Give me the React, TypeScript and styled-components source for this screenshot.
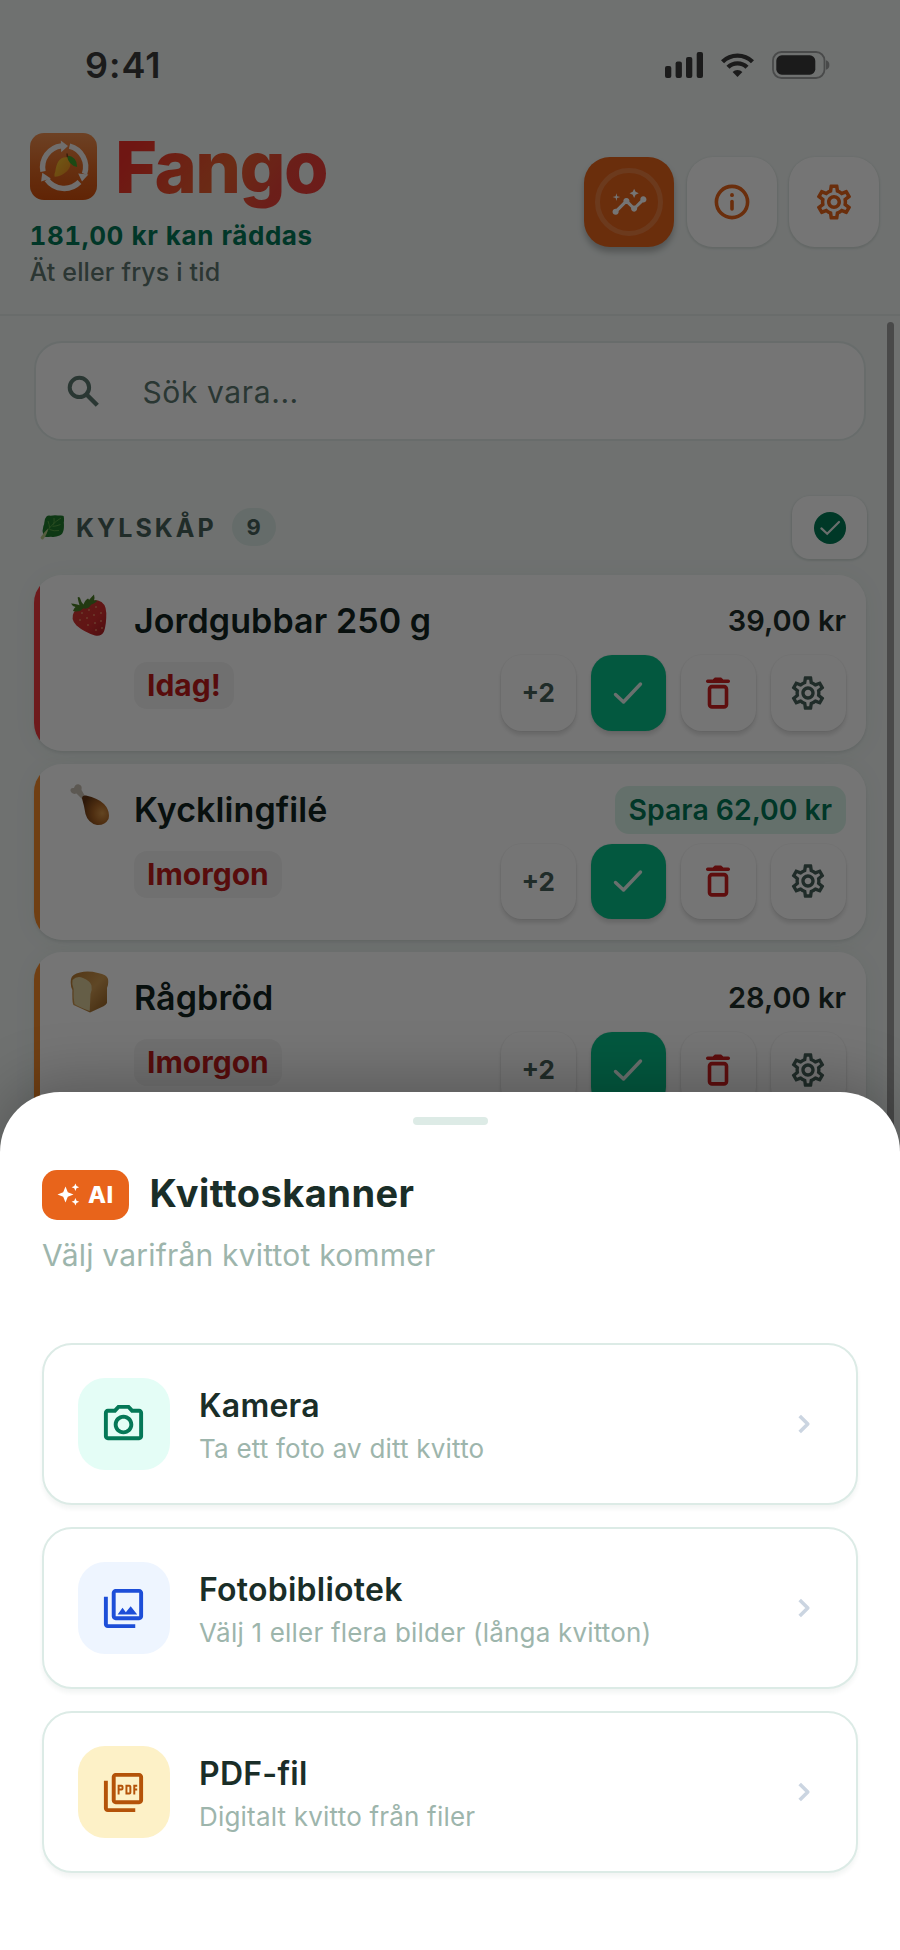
import React from "react";
import styled, { createGlobalStyle } from "styled-components";
import {
  MdInsights,
  MdOutlinePhotoCamera,
  MdOutlinePhotoLibrary,
  MdOutlinePictureAsPdf,
  MdOutlineSettings,
} from "react-icons/md";

const GlobalStyle = createGlobalStyle`
  * { box-sizing: border-box; }
  body { margin: 0; background: #fff; font-family: Inter, "Liberation Sans", sans-serif; }
  svg { display: block; flex: none; }
  button { font: inherit; border: 0; padding: 0; background: none; }
  h1, h2, h3, p { margin: 0; }
`;

const Screen = styled.div`
  position: relative;
  width: 900px;
  height: 1950px;
  overflow: hidden;
  background: #f1f6f4;
`;

/* ---------- status bar ---------- */

const StatusBar = styled.div`
  display: flex;
  align-items: center;
  justify-content: space-between;
  height: 130px;
  padding: 0 70px 0 85px;
  color: #3b3b3b;
`;

const Clock = styled.span`
  font-size: 36px;
  font-weight: 600;
  letter-spacing: 1px;
`;

const StatusIcons = styled.div`
  display: flex;
  align-items: center;
  gap: 18px;
`;

/* ---------- header ---------- */

const Header = styled.header`
  display: flex;
  justify-content: space-between;
  height: 186px;
  padding: 3px 21px 0 29.5px;
  border-bottom: 2px solid #e4ecea;
`;

const Brand = styled.div`
  display: flex;
  align-items: center;
  gap: 18.5px;
  height: 67px;
  margin-bottom: 17.5px;
`;

const BrandName = styled.h1`
  font-size: 72px;
  font-weight: 800;
  line-height: 90px;
  letter-spacing: -1.6px;
  padding-right: 6px;
  color: transparent;
  background: linear-gradient(125deg, #f2302a 12%, #e9602f 52%, #ea4338 74%, #ee3a3a 100%);
  background-clip: text;
  -webkit-background-clip: text;
`;

const Savings = styled.p`
  font-size: 26px;
  font-weight: 700;
  line-height: 36px;
  letter-spacing: 0.57px;
  font-variant-numeric: tabular-nums;
  color: #047857;
`;

const Hint = styled.p`
  font-size: 25px;
  font-weight: 500;
  line-height: 36px;
  letter-spacing: 0.15px;
  color: #5f7770;
`;

const HeaderActions = styled.div`
  display: flex;
  gap: 12.5px;
  margin-top: 24px;
`;

const HeaderButton = styled.button<{ $primary?: boolean }>`
  display: flex;
  align-items: center;
  justify-content: center;
  width: 90px;
  height: 90px;
  border-radius: 26px;
  color: ${(p) => (p.$primary ? "#fff" : "#e8641b")};
  background: ${(p) => (p.$primary ? "#e8641b" : "#fff")};
  box-shadow: ${(p) =>
    p.$primary
      ? "0 5px 6px rgba(0, 0, 0, 0.25)"
      : "0 1px 2px 1px rgba(40, 70, 60, 0.12)"};
`;

const Ring = styled.span`
  display: flex;
  align-items: center;
  justify-content: center;
  width: 68px;
  height: 68px;
  border-radius: 50%;
  border: 5px solid rgba(255, 255, 255, 0.17);
`;

/* ---------- list ---------- */

const List = styled.main`
  display: flex;
  flex-direction: column;
  padding: 25px 34px 0;
`;

const SearchField = styled.div`
  display: flex;
  align-items: center;
  gap: 38.5px;
  height: 100px;
  margin: 0 0 54px;
  padding: 0 27px;
  border: 2px solid #e2ecea;
  border-radius: 28px;
  background: #fff;
  color: #5c7870;
  font-size: 30px;
  letter-spacing: 0.6px;
`;

const Placeholder = styled.span`
  padding-top: 2px;
`;

const SectionHeader = styled.div`
  display: flex;
  align-items: center;
  height: 64px;
  margin-bottom: 16px;
  padding-left: 6px;
`;

const SectionTitle = styled.h2`
  margin: 2px 15px 0 12px;
  font-size: 25px;
  font-weight: 700;
  letter-spacing: 3px;
  color: #47605a;
`;

const CountBadge = styled.span`
  display: flex;
  align-items: center;
  justify-content: center;
  width: 44px;
  height: 38px;
  border-radius: 19px;
  background: #dcebe6;
  color: #47605a;
  font-size: 22px;
  font-weight: 700;
`;

const SectionButton = styled.button`
  display: flex;
  align-items: center;
  justify-content: center;
  width: 75px;
  height: 63px;
  margin: 1px -1px 0 auto;
  border-radius: 18px;
  background: #fff;
  box-shadow: 0 1px 2px 1px rgba(40, 70, 60, 0.13);
`;

const Cards = styled.div`
  display: flex;
  flex-direction: column;
  gap: 12.5px;
`;

const Card = styled.article<{ $accent: string }>`
  display: flex;
  height: 176px;
  padding: 0 20px 0 36px;
  border-radius: 28px;
  background: linear-gradient(90deg, ${(p) => p.$accent} 6px, #fff 6px);
  box-shadow: 0 2px 3px rgba(40, 70, 60, 0.1), 0 2px 24px rgba(40, 80, 65, 0.05);
`;

const CardPicture = styled.div`
  width: 64px;
  padding-top: 19px;
`;

const CardInfo = styled.div`
  flex: 1;
  padding-top: 24px;
`;

const ItemName = styled.h3`
  font-size: 34px;
  font-weight: 600;
  line-height: 44px;
  letter-spacing: 0.1px;
  color: #12241f;
`;

const DueChip = styled.span`
  display: inline-block;
  height: 47px;
  margin-top: 19px;
  padding: 0 13px;
  border-radius: 13px;
  background: #f5f5f5;
  color: #c01c1c;
  font-size: 30px;
  font-weight: 700;
  line-height: 47px;
`;

const CardSide = styled.div`
  display: flex;
  flex-direction: column;
  align-items: flex-end;
  padding-top: 22px;
`;

const Price = styled.span<{ $save?: boolean }>`
  height: 48px;
  margin-bottom: 10px;
  padding: ${(p) => (p.$save ? "0 14px" : "0")};
  border-radius: 14px;
  background: ${(p) => (p.$save ? "#dbf5ea" : "none")};
  color: ${(p) => (p.$save ? "#047857" : "#1f2f2b")};
  font-size: ${(p) => (p.$save ? "28.4px" : "29px")};
  font-weight: 600;
  line-height: 48px;
`;

const Actions = styled.div`
  display: flex;
  gap: 14.5px;
`;

const ActionButton = styled.button<{ $tone: string; $fill?: string }>`
  display: flex;
  align-items: center;
  justify-content: center;
  width: 75.5px;
  height: 75.5px;
  border-radius: 21px;
  background: ${(p) => p.$fill ?? "#fff"};
  color: ${(p) => p.$tone};
  font-size: 26px;
  font-weight: 700;
  box-shadow: 0 4px 4px rgba(0, 0, 0, 0.12), 0 0 1px 1px rgba(0, 0, 0, 0.03);
`;

const ScrollThumb = styled.div`
  position: absolute;
  top: 322px;
  right: 6.5px;
  width: 6.5px;
  height: 900px;
  border-radius: 4px;
  background: #a0a0a0;
`;

const Scrim = styled.div`
  position: absolute;
  inset: 0;
  background: rgba(0, 0, 0, 0.54);
`;

/* ---------- bottom sheet ---------- */

const Sheet = styled.section`
  position: absolute;
  inset: 1092px 0 0;
  display: flex;
  flex-direction: column;
  padding: 25px 42px 0;
  border-radius: 60px 60px 0 0;
  background: #fff;
  box-shadow: 0 -8px 60px rgba(0, 0, 0, 0.26);
`;

const Handle = styled.div`
  align-self: center;
  width: 75px;
  height: 8px;
  margin-bottom: 44.5px;
  border-radius: 4px;
  background: #ddebe6;
`;

const SheetHeading = styled.div`
  display: flex;
  align-items: center;
  gap: 20.5px;
  height: 50px;
`;

const AiChip = styled.span`
  display: flex;
  align-items: center;
  gap: 8px;
  width: 87px;
  height: 50px;
  padding-left: 15px;
  border-radius: 15px;
  background: #e8641b;
  color: #fff;
  font-size: 23.5px;
  font-weight: 800;
  letter-spacing: 0.5px;
`;

const SheetTitle = styled.h2`
  margin-top: -3px;
  font-size: 38px;
  font-weight: 700;
  letter-spacing: 0.45px;
  color: #1a2e28;
`;

const SheetSubtitle = styled.p`
  margin: 17.5px 0 70px;
  font-size: 30px;
  line-height: 36px;
  letter-spacing: 0.2px;
  color: #9db5ac;
`;

const Options = styled.div`
  display: flex;
  flex-direction: column;
  gap: 22px;
`;

const Option = styled.button`
  display: flex;
  align-items: center;
  height: 162px;
  padding: 0 33.5px;
  border: 2px solid #dcebe6;
  border-radius: 30px;
  background: #fff;
  text-align: left;
  box-shadow: 0 4px 4px rgba(20, 60, 45, 0.05);
`;

const OptionIcon = styled.span<{ $fill: string; $tone: string }>`
  display: flex;
  align-items: center;
  justify-content: center;
  width: 92.5px;
  height: 92.5px;
  margin-right: 29px;
  border-radius: 27px;
  background: ${(p) => p.$fill};
  color: ${(p) => p.$tone};
`;

const OptionText = styled.span`
  display: flex;
  flex: 1;
  flex-direction: column;
  padding-top: 2px;
`;

const OptionTitle = styled.span`
  margin-bottom: 4px;
  font-size: 32px;
  font-weight: 600;
  line-height: 43px;
  letter-spacing: 0.25px;
  color: #1a2e28;
`;

const OptionHint = styled.span`
  font-size: 26px;
  line-height: 36px;
  letter-spacing: 0.2px;
  color: #9db5ac;
`;

/* ---------- drawings ---------- */

const SignalIcon = () => (
  <svg width="38" height="26" viewBox="0 0 38 26" fill="currentColor">
    <rect x="0" y="14" width="6.3" height="12" rx="2" />
    <rect x="10.6" y="9.5" width="6.3" height="16.5" rx="2" />
    <rect x="21" y="5" width="6.3" height="21" rx="2" />
    <rect x="31.7" y="0" width="6.3" height="26" rx="2" />
  </svg>
);

const WifiIcon = () => (
  <svg width="33" height="24" viewBox="0 0 33 24" fill="none" stroke="currentColor" strokeWidth="4.4">
    <path d="M1.5 8.8a21.3 21.3 0 0 1 30 0" />
    <path d="M7 14.3a13.5 13.5 0 0 1 19 0" />
    <path d="M16.5 24l-4.9-4.9a6.9 6.9 0 0 1 9.8 0z" fill="currentColor" stroke="none" />
  </svg>
);

const BatteryIcon = () => (
  <svg width="58" height="28" viewBox="0 0 58 28">
    <rect x="1" y="1" width="51.5" height="26" rx="8.5" fill="none" stroke="#9fa1a1" strokeWidth="1.8" />
    <rect x="4.3" y="4.3" width="39" height="19.4" rx="5.5" fill="#3b3b3b" />
    <path d="M54 9.3q3.4 1 3.4 4.7t-3.4 4.7z" fill="#9fa1a1" />
  </svg>
);

const LogoIcon = () => (
  <svg width="67" height="67" viewBox="0 0 67 67">
    <defs>
      <linearGradient id="logoBg" x1="0" y1="0" x2="0" y2="1">
        <stop offset="0" stopColor="#ee8f50" />
        <stop offset="0.5" stopColor="#e06a26" />
        <stop offset="1" stopColor="#d24f0c" />
      </linearGradient>
      <linearGradient id="mango" x1="0" y1="0" x2="1" y2="1">
        <stop offset="0" stopColor="#f5c832" />
        <stop offset="1" stopColor="#ee8a1c" />
      </linearGradient>
    </defs>
    <rect width="67" height="67" rx="14" fill="url(#logoBg)" />
    <g fill="none" stroke="#f4f0ee" strokeWidth="5.4">
      <path d="M13 38.5A21.5 21.5 0 0 1 31.5 12.900" />
      <path d="M39.5 13.2A21.5 21.5 0 0 1 54.5 41" />
      <path d="M49.5 49A21.5 21.5 0 0 1 16.8 46.6" />
    </g>
    <g fill="#f4f0ee">
      <path d="M30.8 7.6L38 13l-6.8 6.2z" />
      <path d="M48.2 40.4l10.2 1.2-6.4 7z" />
      <path d="M12.3 39.8l8.6 5.6-9.8 3z" />
    </g>
    <path d="M36.6 24.2q6.2 5 2.4 11.4c-3 5-9.800 8.600-14.600 8q-.6-1.800.9-5.200C26.600 29 30 23.600 36.600 24.200z" fill="url(#mango)" />
    <path d="M37 22.5q10 1 10.2 11.5Q38.2 32 37 22.500z" fill="#3fa02c" />
    <path d="M37.4 24l-.4-3.5" stroke="#7a3f18" strokeWidth="1.4" />
  </svg>
);

const InfoIcon = () => (
  <svg width="36" height="36" viewBox="0 0 36 36" fill="none" stroke="currentColor" strokeLinecap="round">
    <circle cx="18" cy="18" r="15.6" strokeWidth="3.6" />
    <path d="M18 17.5v7.5" strokeWidth="3.6" />
    <path d="M18 10.9v.3" strokeWidth="3.8" />
  </svg>
);

const SearchIcon = () => (
  <svg width="41" height="41" viewBox="0 0 41 41" fill="none" stroke="currentColor">
    <circle cx="16.400" cy="16.400" r="9.700" strokeWidth="4" />
    <path d="M23.300 23.300L34.300 34.300" strokeWidth="4.400" />
  </svg>
);

const ChevronIcon = () => (
  <svg width="38" height="38" viewBox="0 0 38 38" fill="none" stroke="#cbd5e1" strokeWidth="3.600">
    <path d="M14.700 10.900l8.100 8.100-8.100 8.100" strokeLinejoin="round" />
  </svg>
);

const CheckCircleIcon = () => (
  <svg width="32" height="32" viewBox="0 0 32 32" fill="none">
    <circle cx="16" cy="16" r="16" fill="#007a55" />
    <path d="M7.4 16.4l5.8 5.4L25 10" stroke="#e6efec" strokeWidth="2.2" strokeLinecap="round" />
  </svg>
);

const CheckIcon = () => (
  <svg width="30" height="24" viewBox="0 0 30 24" fill="none">
    <path d="M2.5 13.5l8 7.5L27.5 3" stroke="currentColor" strokeWidth="3.4" strokeLinecap="round" strokeLinejoin="round" />
  </svg>
);

const TrashIcon = () => (
  <svg width="24" height="32" viewBox="0 0 24 32" fill="none" stroke="currentColor">
    <path d="M1.7 4.2h20.6" strokeWidth="3.4" strokeLinecap="round" />
    <path d="M7 3.2l1.6-2.2h6.8L17 3.2z" fill="currentColor" strokeWidth="1" />
    <rect x="3.5" y="9.6" width="17" height="20.3" rx="2.5" strokeWidth="3.6" />
  </svg>
);

const SparkleIcon = () => (
  <svg width="23" height="23" viewBox="0 0 23 23" fill="currentColor">
    <path d="M8.500 3.500l2.300 5.700 5.700 2.300-5.700 2.300-2.300 5.700-2.300-5.700L.5 11.500l5.700-2.300z" />
    <path d="M18.400.4l1.100 2.700 2.700 1.100-2.700 1.100-1.100 2.700-1.100-2.700-2.700-1.100 2.700-1.100z" />
    <path d="M18.400 15l1.100 2.700 2.700 1.100-2.700 1.100-1.100 2.700-1.100-2.700-2.700-1.100 2.700-1.100z" />
  </svg>
);

const LeafIcon = () => (
  <svg width="24" height="25" viewBox="0 0 24 25">
    <path d="M6.500 1.500Q8 .2 10.500.8 15-.2 18 .6q4.500-.6 5.600.4.800 3 .2 6.600.4 4-.2 7.500-1 4.500-4 5.500-4.500 2-8.600 1.200Q7.500 22 5 21.700 1.800 18 2.800 14.500 3 11 4.200 9 4 4 6.500 1.500z" fill="#1f7a2c" />
    <path d="M21 3Q11 9 4.500 20M8 6q1.500 4 1.500 7M14 3q.5 4-.5 6.500M20.500 9.500q-5 2-8 1.800M19 15.500q-5 1-9.500-1" fill="none" stroke="#5aa648" strokeWidth="1" />
    <path d="M.5 22.500Q3 18.500 8 13.500 7.500 19 3 24.500 1 25 .5 22.500z" fill="#b9c98a" />
  </svg>
);

const StrawberryIcon = () => (
  <svg width="38" height="43" viewBox="0 0 38 43">
    <defs>
      <linearGradient id="berry" x1="0" y1="0" x2="1" y2="1">
        <stop offset="0" stopColor="#cf3a32" />
        <stop offset="0.6" stopColor="#d42e2e" />
        <stop offset="1" stopColor="#a81f24" />
      </linearGradient>
    </defs>
    <path d="M4 18Q10 12 17 11 22 5 28 6.500 36 8.500 36.300 19 36.500 30 34 37.500 31 43 25 41.500 14 38 6.500 31.500 0 25 4 18z" fill="url(#berry)" />
    <g fill="#f0a878">
      {[[12, 19], [19, 16], [26, 13], [10, 26], [17, 24], [24, 21], [31, 19], [18, 31], [25, 29], [31, 27], [26, 36], [32, 34]].map(([x, y]) => (
        <ellipse key={`${x}-${y}`} cx={x} cy={y} rx="0.7" ry="1.1" />
      ))}
    </g>
    <path d="M1 9.500q6 .5 8.500 1.800Q8 6 7.600 3.500q1.500-1 2.400.5 1 4 3.500 6.500Q15 6 18 4.500q1 .5 1 1.500 2.500-3 5-5.500Q25 4 24 6.500q2-.5 3.500.3-3 3-6.500 4-3 5-7.500 3.500Q9 19 3 17q1-3 2.500-4Q2.500 12.500 1 9.500z" fill="#4a7d26" />
  </svg>
);

const DrumstickIcon = () => (
  <svg width="40" height="43" viewBox="0 0 40 43">
    <defs>
      <radialGradient id="meat" cx="0.75" cy="0.6" r="0.75">
        <stop offset="0" stopColor="#d8974a" />
        <stop offset="0.45" stopColor="#ad6626" />
        <stop offset="1" stopColor="#653614" />
      </radialGradient>
    </defs>
    <path d="M.5 8Q0 4.500 4 5 5 .8 8.500 1.200 12.500 2 11.500 7l3.500 6-3 3-5.500-5.500Q2 12 .5 8z" fill="#c9bfb4" />
    <path d="M12 15.500q0-3.500 4-3Q28 15 34 21 40.500 28 38.500 36 35 42.500 27 42 18 40 15.500 31 14 22 12 15.500z" fill="url(#meat)" />
  </svg>
);

const BreadIcon = () => (
  <svg width="39" height="43" viewBox="0 0 39 43">
    <defs>
      <linearGradient id="crust" x1="0" y1="0" x2="1" y2="1">
        <stop offset="0" stopColor="#b5772f" />
        <stop offset="0.5" stopColor="#cf9a52" />
        <stop offset="1" stopColor="#8f5a1e" />
      </linearGradient>
    </defs>
    <path d="M1 8Q2 3 10 1.500 18-.5 28 2q9 1.500 10 6 .8 5-1 9v15q-1 2-3.500 3.200L20 41.500 3.500 34Q2 32 2.400 19 0 15 1 8z" fill="url(#crust)" />
    <path d="M2.500 9Q7 4.500 13 7q7 2.500 8.500 7.500.8 5-1 8.500l-.8 17Q10 36.500 4.500 33 3.200 26 3.600 18 1.500 13 2.500 9z" fill="#ddcd9c" />
  </svg>
);

/* ---------- content ---------- */

type Item = {
  name: string;
  due: string;
  price: string;
  save?: boolean;
  accent: string;
  picture: React.ReactNode;
};

const items: Item[] = [
  { name: "Jordgubbar 250 g", due: "Idag!", price: "39,00 kr", accent: "#f03a3e", picture: <StrawberryIcon /> },
  { name: "Kycklingfilé", due: "Imorgon", price: "Spara 62,00 kr", save: true, accent: "#f58a2a", picture: <DrumstickIcon /> },
  { name: "Rågbröd", due: "Imorgon", price: "28,00 kr", accent: "#f58a2a", picture: <BreadIcon /> },
];

const sources = [
  { title: "Kamera", hint: "Ta ett foto av ditt kvitto", fill: "#e4fdf6", tone: "#047857", Icon: MdOutlinePhotoCamera },
  { title: "Fotobibliotek", hint: "Välj 1 eller flera bilder (långa kvitton)", fill: "#eef5ff", tone: "#1d4ed8", Icon: MdOutlinePhotoLibrary },
  { title: "PDF-fil", hint: "Digitalt kvitto från filer", fill: "#fdf1c7", tone: "#b45309", Icon: MdOutlinePictureAsPdf },
];

const ItemCard = ({ item }: { item: Item }) => (
  <Card $accent={item.accent}>
    <CardPicture>{item.picture}</CardPicture>
    <CardInfo>
      <ItemName>{item.name}</ItemName>
      <DueChip>{item.due}</DueChip>
    </CardInfo>
    <CardSide>
      <Price $save={item.save}>{item.price}</Price>
      <Actions>
        <ActionButton $tone="#47605a">+2</ActionButton>
        <ActionButton $tone="#e8f4ef" $fill="#08c08a">
          <CheckIcon />
        </ActionButton>
        <ActionButton $tone="#cc1f1f">
          <TrashIcon />
        </ActionButton>
        <ActionButton $tone="#47605a">
          <MdOutlineSettings size={40} />
        </ActionButton>
      </Actions>
    </CardSide>
  </Card>
);

export default function App() {
  return (
    <Screen>
      <GlobalStyle />
      <StatusBar>
        <Clock>9:41</Clock>
        <StatusIcons>
          <SignalIcon />
          <WifiIcon />
          <BatteryIcon />
        </StatusIcons>
      </StatusBar>
      <Header>
        <div>
          <Brand>
            <LogoIcon />
            <BrandName>Fango</BrandName>
          </Brand>
          <Savings>181,00 kr kan räddas</Savings>
          <Hint>Ät eller frys i tid</Hint>
        </div>
        <HeaderActions>
          <HeaderButton $primary>
            <Ring>
              <MdInsights size={37} />
            </Ring>
          </HeaderButton>
          <HeaderButton>
            <InfoIcon />
          </HeaderButton>
          <HeaderButton>
            <MdOutlineSettings size={42} />
          </HeaderButton>
        </HeaderActions>
      </Header>
      <List>
        <SearchField>
          <SearchIcon />
          <Placeholder>Sök vara...</Placeholder>
        </SearchField>
        <SectionHeader>
          <LeafIcon />
          <SectionTitle>KYLSKÅP</SectionTitle>
          <CountBadge>9</CountBadge>
          <SectionButton>
            <CheckCircleIcon />
          </SectionButton>
        </SectionHeader>
        <Cards>
          {items.map((item) => (
            <ItemCard key={item.name} item={item} />
          ))}
        </Cards>
      </List>
      <ScrollThumb />
      <Scrim />
      <Sheet>
        <Handle />
        <SheetHeading>
          <AiChip>
            <SparkleIcon />
            AI
          </AiChip>
          <SheetTitle>Kvittoskanner</SheetTitle>
        </SheetHeading>
        <SheetSubtitle>Välj varifrån kvittot kommer</SheetSubtitle>
        <Options>
          {sources.map(({ title, hint, fill, tone, Icon }) => (
            <Option key={title}>
              <OptionIcon $fill={fill} $tone={tone}>
                <Icon size={47} />
              </OptionIcon>
              <OptionText>
                <OptionTitle>{title}</OptionTitle>
                <OptionHint>{hint}</OptionHint>
              </OptionText>
              <ChevronIcon />
            </Option>
          ))}
        </Options>
      </Sheet>
    </Screen>
  );
}
